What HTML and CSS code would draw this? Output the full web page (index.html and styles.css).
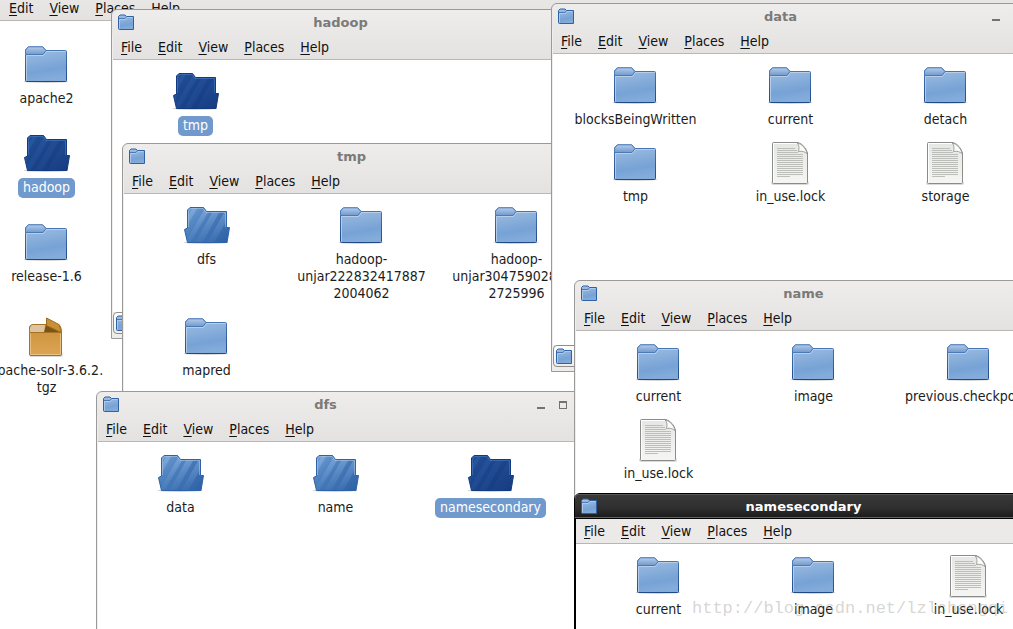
FILE: index.html
```html
<!DOCTYPE html>
<html lang="en">
<head>
<meta charset="utf-8">
<title>Desktop</title>
<link rel="stylesheet" href="styles.css">
</head>
<body>
<svg class="defs" aria-hidden="true">
  <defs>
    <linearGradient id="g-body" x1="0" y1="0" x2="0.2" y2="1">
      <stop offset="0" stop-color="#a3c0e3"/><stop offset="0.75" stop-color="#76a2d5"/><stop offset="1" stop-color="#83acdb"/>
    </linearGradient>
    <linearGradient id="g-tab" x1="0" y1="0" x2="0" y2="1">
      <stop offset="0" stop-color="#b4cceb"/><stop offset="1" stop-color="#7099cb"/>
    </linearGradient>
    <linearGradient id="g-edge" x1="0" y1="0" x2="0" y2="1">
      <stop offset="0" stop-color="#4a7ab8"/><stop offset="1" stop-color="#204a87"/>
    </linearGradient>
    <linearGradient id="g-open" x1="0" y1="0" x2="1" y2="1">
      <stop offset="0" stop-color="#6f9fd4"/><stop offset="0.5" stop-color="#4478b8"/><stop offset="1" stop-color="#2c60a5"/>
    </linearGradient>
    <linearGradient id="g-stripe" x1="0" y1="0" x2="0" y2="1">
      <stop offset="0" stop-color="#a6c6ec" stop-opacity=".42"/><stop offset="1" stop-color="#8db3e0" stop-opacity=".06"/>
    </linearGradient>
    <linearGradient id="g-dark" x1="0" y1="0" x2="1" y2="1">
      <stop offset="0" stop-color="#2a5ba4"/><stop offset="1" stop-color="#163a80"/>
    </linearGradient>
    <linearGradient id="g-page" x1="0" y1="0" x2="0" y2="1">
      <stop offset="0" stop-color="#e6e7e4"/><stop offset="1" stop-color="#f5f5f3"/>
    </linearGradient>
    <linearGradient id="g-box" x1="0" y1="0" x2="0" y2="1">
      <stop offset="0" stop-color="#cf9641"/><stop offset="1" stop-color="#dca553"/>
    </linearGradient>
    <clipPath id="c-open"><path d="M5.500 23V5L8 2.500H21.500L24.500 6.500H44.500V22.500H47.500L45 37.500H5.500L2.500 24.500Z"/></clipPath>
  </defs>
  <symbol id="folder" viewBox="0 0 49 44">
    <ellipse cx="24" cy="37.500" rx="22.500" ry="1.500" fill="#000" opacity=".18"/>
    <path d="M3.500 36.500V6L6 3H21L24 6.500H43.500Q44.500 6.500 44.500 7.500V36.500Q44.500 37.500 43.500 37.500H4.500Q3.500 37.500 3.500 36.500Z" fill="url(#g-body)" stroke="url(#g-edge)"/>
    <path d="M4.500 36.500V11.500H21.500L24.500 7.500H43.500" fill="none" stroke="#c3d7ef" opacity=".75"/>
    <path d="M3.500 10.500V6L6.500 2.800H20.500L24 6.500L21 10.500Z" fill="url(#g-tab)" stroke="#4a7ab8"/>
  </symbol>
  <symbol id="open" viewBox="0 0 49 44">
    <ellipse cx="24" cy="37.500" rx="22.500" ry="1.500" fill="#000" opacity=".18"/>
    <path d="M5.500 23V5L8 2.500H21.500L24.500 6.500H44.500V22.500H47.500L45 37.500H5.500L2.500 24.500Z" fill="url(#g-open)"/>
    <g clip-path="url(#c-open)" fill="url(#g-stripe)">
      <path d="M11 2H16L5 21V13ZM23 3L27 6L8 38H3ZM31 6H38L20 38H13ZM43 6H46V13L32 38H25Z"/>
    </g>
    <path d="M5.500 23V5L8 2.500H21.500L24.500 6.500H44.500V22.500H47.500L45 37.500H5.500L2.500 24.500Z" fill="none" stroke="#2f62a6"/>
    <path d="M6.500 22V6L8.500 3.500H21L24 7.500H43.500V22" fill="none" stroke="#a9c7ea" opacity=".6"/>
  </symbol>
  <symbol id="open-selected" viewBox="0 0 49 44">
    <ellipse cx="24" cy="37.500" rx="22.500" ry="1.500" fill="#000" opacity=".18"/>
    <path d="M5.500 23V5L8 2.500H21.500L24.500 6.500H44.500V22.500H47.500L45 37.500H5.500L2.500 24.500Z" fill="url(#g-dark)"/>
    <g clip-path="url(#c-open)" fill="#0c2f70" opacity=".25">
      <path d="M8 2H12L5 13V8ZM16 2H23L5 33V21ZM27 6H31L13 38H8ZM38 6H43L25 38H20Z"/>
    </g>
    <path d="M5.500 23V5L8 2.500H21.500L24.500 6.500H44.500V22.500H47.500L45 37.500H5.500L2.500 24.500Z" fill="none" stroke="#123a80"/>
    <path d="M6.500 22V6L8.500 3.500H21L24 7.500H43.500V22" fill="none" stroke="#4a7cc2" opacity=".6"/>
  </symbol>
  <symbol id="file" viewBox="0 0 49 44">
    <rect x="5" y="39" width="38" height="4" rx="2" fill="#000" opacity=".15"/>
    <path d="M7.500 .5H32Q39 3 41.500 11V40.500Q41.500 41.500 40.500 41.500H7.500Q6.500 41.500 6.500 40.500V1.500Q6.500 .5 7.500 .5Z" fill="url(#g-page)" stroke="#8a8c88"/>
    <path d="M7.500 40.500V1.500H31" fill="none" stroke="#fff"/>
    <path d="M11 6.500H29M11 8.500H31M11 10.500H32M11 12.500H37M11 14.500H37M11 16.500H37M11 18.500H37M11 20.500H37M11 22.500H37M11 24.500H37M11 26.500H37M11 28.500H37M11 30.500H37M11 32.500H37M11 34.500H24" stroke="#bcbeba"/>
    <path d="M31 .8Q34 4 32.500 9.500Q38 8.500 41.300 12Q39 3 31 .8Z" fill="#fbfbfa" stroke="#8f918d" stroke-width=".8"/>
  </symbol>
  <symbol id="archive" viewBox="0 0 49 49">
    <rect x="7" y="42" width="34" height="4" rx="2" fill="#000" opacity=".15"/>
    <path d="M7.500 21V16Q8 13.500 11 13.500H36Q39 13.500 39.500 21Z" fill="#c9a877" stroke="#a57425"/>
    <path d="M10 14H23L22 21H8V17Z" fill="#dcc5a0"/>
    <path d="M24 13L38 21.500H22Z" fill="#7d5316"/>
    <path d="M24.500 7L37 13.500L39.500 21.500L24.500 14.500Z" fill="#c98f35" stroke="#a06c1c"/>
    <path d="M7.500 21.500H39.500V43Q39.500 44.500 38 44.500H9Q7.500 44.500 7.500 43Z" fill="url(#g-box)" stroke="#a57020"/>
    <path d="M8.500 22.500V43.500H38.500V22.500" fill="none" stroke="#edc88c" opacity=".8"/>
  </symbol>
  <symbol id="small" viewBox="0 0 16 16">
    <path d="M.5 14.500V2.500L2 1H7L8.500 2.500H15.500V15.500H1.500Q.5 15.500 .5 14.500Z" fill="url(#g-body)" stroke="#2f62a5"/>
    <path d="M1.500 14.500V5.500H7.500L9 3.500H14.500" fill="none" stroke="#b6cfee" opacity=".8"/>
    <path d="M1 4.500H7L8.500 2.500" fill="none" stroke="#4a7ab8"/>
  </symbol>
</svg>

<main class="desktop">
  <section class="window w-root">
    <header class="title"><svg class="app"><use href="#small"/></svg><h2></h2></header>
    <div class="pane">
      <nav class="menu"><button><u>F</u>ile</button><button><u>E</u>dit</button><button><u>V</u>iew</button><button><u>P</u>laces</button><button><u>H</u>elp</button></nav>
      <ul class="icons column">
        <li><svg class="icon"><use href="#folder"/></svg><span>apache2</span></li>
        <li class="selected"><svg class="icon"><use href="#open-selected"/></svg><span>hadoop</span></li>
        <li><svg class="icon"><use href="#folder"/></svg><span>release-1.6</span></li>
        <li><svg class="icon tall"><use href="#archive"/></svg><span>apache-solr-3.6.2.<br>tgz</span></li>
      </ul>
    </div>
  </section>

  <section class="window w-hadoop">
    <header class="title"><svg class="app"><use href="#small"/></svg><h2>hadoop</h2><button class="ctl min" aria-label="Minimize"></button><button class="ctl max" aria-label="Maximize"></button><button class="ctl" aria-label="Close"></button></header>
    <div class="pane">
      <nav class="menu"><button><u>F</u>ile</button><button><u>E</u>dit</button><button><u>V</u>iew</button><button><u>P</u>laces</button><button><u>H</u>elp</button></nav>
      <ul class="icons">
        <li class="selected"><svg class="icon"><use href="#open-selected"/></svg><span>tmp</span></li>
      </ul>
      <footer class="status"><button class="location" aria-label="Location"><svg class="app"><use href="#small"/></svg></button></footer>
    </div>
  </section>

  <section class="window w-tmp">
    <header class="title"><svg class="app"><use href="#small"/></svg><h2>tmp</h2><button class="ctl min" aria-label="Minimize"></button><button class="ctl max" aria-label="Maximize"></button><button class="ctl" aria-label="Close"></button></header>
    <div class="pane">
      <nav class="menu"><button><u>F</u>ile</button><button><u>E</u>dit</button><button><u>V</u>iew</button><button><u>P</u>laces</button><button><u>H</u>elp</button></nav>
      <ul class="icons">
        <li><svg class="icon"><use href="#open"/></svg><span>dfs</span></li>
        <li><svg class="icon"><use href="#folder"/></svg><span>hadoop-<br>unjar222832417887<br>2004062</span></li>
        <li><svg class="icon"><use href="#folder"/></svg><span>hadoop-<br>unjar304759028814<br>2725996</span></li>
        <li><svg class="icon"><use href="#folder"/></svg><span>mapred</span></li>
      </ul>
    </div>
  </section>

  <section class="window w-data">
    <header class="title"><svg class="app"><use href="#small"/></svg><h2>data</h2><button class="ctl min" aria-label="Minimize"></button><button class="ctl max" aria-label="Maximize"></button><button class="ctl" aria-label="Close"></button></header>
    <div class="pane">
      <nav class="menu"><button><u>F</u>ile</button><button><u>E</u>dit</button><button><u>V</u>iew</button><button><u>P</u>laces</button><button><u>H</u>elp</button></nav>
      <ul class="icons">
        <li><svg class="icon"><use href="#folder"/></svg><span>blocksBeingWritten</span></li>
        <li><svg class="icon"><use href="#folder"/></svg><span>current</span></li>
        <li><svg class="icon"><use href="#folder"/></svg><span>detach</span></li>
        <li><svg class="icon"><use href="#folder"/></svg><span>tmp</span></li>
        <li><svg class="icon"><use href="#file"/></svg><span>in_use.lock</span></li>
        <li><svg class="icon"><use href="#file"/></svg><span>storage</span></li>
      </ul>
      <footer class="status"><button class="location" aria-label="Location"><svg class="app"><use href="#small"/></svg></button></footer>
    </div>
  </section>

  <section class="window w-dfs">
    <header class="title"><svg class="app"><use href="#small"/></svg><h2>dfs</h2><button class="ctl min" aria-label="Minimize"></button><button class="ctl max" aria-label="Maximize"></button><button class="ctl" aria-label="Close"></button></header>
    <div class="pane">
      <nav class="menu"><button><u>F</u>ile</button><button><u>E</u>dit</button><button><u>V</u>iew</button><button><u>P</u>laces</button><button><u>H</u>elp</button></nav>
      <ul class="icons">
        <li><svg class="icon"><use href="#open"/></svg><span>data</span></li>
        <li><svg class="icon"><use href="#open"/></svg><span>name</span></li>
        <li class="selected"><svg class="icon"><use href="#open-selected"/></svg><span>namesecondary</span></li>
      </ul>
    </div>
  </section>

  <section class="window w-name">
    <header class="title"><svg class="app"><use href="#small"/></svg><h2>name</h2><button class="ctl min" aria-label="Minimize"></button><button class="ctl max" aria-label="Maximize"></button><button class="ctl" aria-label="Close"></button></header>
    <div class="pane">
      <nav class="menu"><button><u>F</u>ile</button><button><u>E</u>dit</button><button><u>V</u>iew</button><button><u>P</u>laces</button><button><u>H</u>elp</button></nav>
      <ul class="icons">
        <li><svg class="icon"><use href="#folder"/></svg><span>current</span></li>
        <li><svg class="icon"><use href="#folder"/></svg><span>image</span></li>
        <li><svg class="icon"><use href="#folder"/></svg><span>previous.checkpoint</span></li>
        <li><svg class="icon"><use href="#file"/></svg><span>in_use.lock</span></li>
      </ul>
    </div>
  </section>

  <section class="window active w-namesecondary">
    <header class="title"><svg class="app"><use href="#small"/></svg><h2>namesecondary</h2><button class="ctl" aria-label="Minimize"></button><button class="ctl" aria-label="Maximize"></button><button class="ctl" aria-label="Close"></button></header>
    <div class="pane">
      <nav class="menu"><button><u>F</u>ile</button><button><u>E</u>dit</button><button><u>V</u>iew</button><button><u>P</u>laces</button><button><u>H</u>elp</button></nav>
      <ul class="icons">
        <li><svg class="icon"><use href="#folder"/></svg><span>current</span></li>
        <li><svg class="icon"><use href="#folder"/></svg><span>image</span></li>
        <li><svg class="icon"><use href="#file"/></svg><span>in_use.lock</span></li>
      </ul>
    </div>
  </section>

  <p class="watermark">http://blog.csdn.net/lzlchangqi</p>
</main>
</body>
</html>
```
FILE: styles.css
```css
*, *::before { box-sizing: border-box; }

body {
  margin: 0;
  font: 14px/17px "DejaVu Sans Condensed", "DejaVu Sans", sans-serif;
  color: #1c1c1c;
}

.defs { position: absolute; width: 0; height: 0; }

.desktop {
  position: relative;
  height: 100vh;
  overflow: hidden;
  background: #fff;
}

/* Windows */
.window {
  position: absolute;
  display: flex;
  flex-direction: column;
  width: 503px;
  height: 369px;
  border: 1px solid #9b9a98;
  border-radius: 6px 6px 0 0;
  background: linear-gradient(#eeedec, #e3e2e0 50px);
  overflow: hidden;
}

.w-root { left: -38px; top: -30px; width: 110%; height: 110%; }
.w-hadoop { left: 111px; top: 9px; height: 330px; }
.w-tmp { left: 122px; top: 143px; }
.w-data { left: 551px; top: 3px; }
.w-dfs { left: 96px; top: 391px; }
.w-name { left: 574px; top: 280px; }
.w-namesecondary { left: 574px; top: 493px; }

.title {
  display: flex;
  align-items: center;
  flex: none;
  height: 24px;
  padding: 0 2px 0 6px;
}

.title h2 {
  flex: 1;
  margin: 0;
  padding-left: 2px;
  font: bold 13px/17px "DejaVu Sans", sans-serif;
  text-align: center;
  color: #7b7a78;
}

.app { width: 16px; height: 16px; flex: none; }

.ctl {
  display: flex;
  justify-content: center;
  align-items: center;
  width: 22px;
  height: 22px;
  padding: 0;
  border: 0;
  background: none;
}

.min::before {
  content: "";
  width: 8px;
  height: 2px;
  margin-top: 8px;
  background: #737270;
}

.max::before {
  content: "";
  width: 8px;
  height: 8px;
  margin-top: 2px;
  border: 1px solid #737270;
  border-top-width: 2px;
}

.pane {
  display: flex;
  flex-direction: column;
  flex: 1;
  min-height: 0;
  border: solid #efeeec;
  border-width: 0 1px;
}

.menu {
  display: flex;
  flex: none;
  height: 26px;
  padding-top: 2px;
  border-bottom: 1px solid #b8b7b5;
}

.menu button {
  padding: 0 8px;
  border: 0;
  background: none;
  font: inherit;
  color: #111;
}

.menu u { text-underline-offset: 2px; text-decoration-thickness: 1px; }

/* Icon view */
.icons {
  display: grid;
  grid-template-columns: repeat(3, 155px);
  align-content: start;
  row-gap: 14px;
  flex: 1;
  margin: 0;
  padding: 11px 0 0 5px;
  list-style: none;
  background: #fff;
}

.icons.column {
  grid-template-columns: 155px;
  row-gap: 26px;
  padding-top: 23px;
}

.icons li {
  display: flex;
  flex-direction: column;
  align-items: center;
  gap: 2px;
  text-align: center;
  white-space: nowrap;
}

.icon { width: 49px; height: 44px; }
.icon.tall { height: 49px; }

.selected span {
  margin: -1px 0 -2px;
  padding: 1px 5px 2px;
  border-radius: 5px;
  background: #7099cd;
  color: #fff;
}

.status {
  flex: none;
  height: 26px;
  background: #edeceb;
}

.location {
  display: flex;
  align-items: center;
  width: 90px;
  height: 22px;
  padding: 0 2px;
  border: 1px solid #8f8e8c;
  border-radius: 4px;
  background: linear-gradient(#fff, #eeedec);
}

/* Focused window */
.active { border-color: #000; background: #ebeae8; }
.active .title {
  background: linear-gradient(#3a3a3a, #2e2e2e 60%, #191919);
  box-shadow: inset 0 1px #575757, inset 0 -1px #49688f;
}
.active .title h2 { color: #fff; }
.active .pane { border-color: #000; border-width: 1px 1px 0; }
.active .menu { height: 25px; padding-top: 0; }

.watermark {
  position: absolute;
  left: 692px;
  top: 599px;
  margin: 0;
  font: 17px/20px "Liberation Mono", monospace;
  color: rgba(150, 150, 145, 0.4);
  white-space: nowrap;
  pointer-events: none;
}
```
